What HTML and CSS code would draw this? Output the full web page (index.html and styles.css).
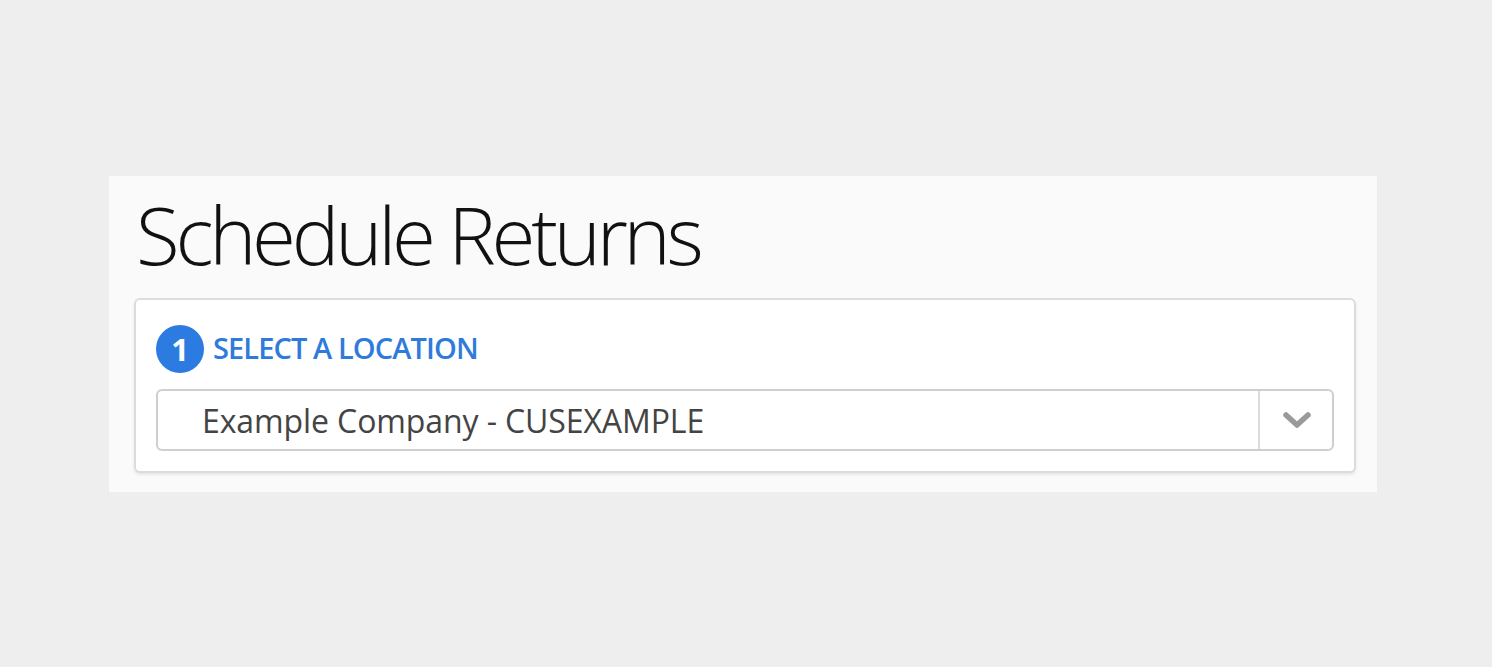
FILE: index.html
```html
<!DOCTYPE html>
<html>
<head>
<meta charset="utf-8">
<link rel="stylesheet" href="styles.css">
</head>
<body>
<div class="page">
  <section class="panel">
    <h1 class="title">Schedule Returns</h1>
    <div class="card">
      <div class="step">
        <span class="badge">1</span>
        <span class="step-label">SELECT A LOCATION</span>
      </div>
      <div class="select">
        <span class="select-value">Example Company - CUSEXAMPLE</span>
        <span class="select-arrow">
          <svg width="30" height="20" viewBox="0 0 30 20"><path d="M4 5 L15 15 L26 5" fill="none" stroke="#9a9a9a" stroke-width="5.5" stroke-linecap="round" stroke-linejoin="round"/></svg>
        </span>
      </div>
    </div>
  </section>
</div>
</body>
</html>
```
FILE: styles.css
```css
html, body { margin: 0; padding: 0; }
body { background: #eeeeee; font-family: "Open Sans", sans-serif; width: 1492px; height: 667px; overflow: hidden; }
.page { padding: 176px 0 0 109px; }
.panel { width: 1268px; height: 316px; background: #fafafa; box-sizing: border-box; padding: 0 21px 0 25px; }
.title { margin: 0 0 6px 0; font-weight: 300; font-size: 80px; line-height: 116px; color: #111; letter-spacing: -4.25px; padding-left: 2px; }
.card { background: #fff; border: 2px solid #dcdcdc; border-radius: 6px; box-shadow: 0 2px 3px rgba(0,0,0,0.08); height: 175px; box-sizing: border-box; padding: 25px 20px 0 20px; }
.step { display: flex; align-items: center; height: 48px; }
.badge { width: 48px; height: 48px; border-radius: 50%; background: #2b7be0; color: #fff; font-weight: 700; font-size: 31px; display: flex; align-items: center; justify-content: center; }
.step-label { margin-left: 9px; margin-bottom: 3px; color: #2f7bdc; font-weight: 600; font-size: 29px; letter-spacing: -0.9px; }
.select { margin-top: 16px; height: 62px; border: 2px solid #cfcfcf; border-radius: 6px; box-sizing: border-box; display: flex; align-items: center; }
.select-value { flex: 1; padding-left: 44px; font-size: 32px; color: #444; letter-spacing: -0.1px; }
.select-arrow { width: 74px; height: 100%; border-left: 2px solid #dcdcdc; display: flex; align-items: center; justify-content: center; padding-left: 2px; box-sizing: border-box; }
```
